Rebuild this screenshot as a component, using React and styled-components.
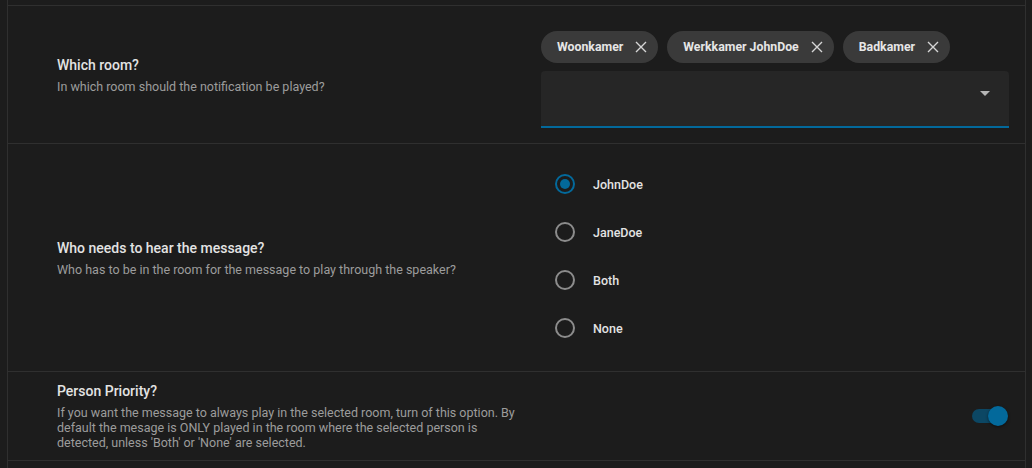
import React, { useState } from 'react';
import styled, { createGlobalStyle } from 'styled-components';

const GlobalStyle = createGlobalStyle`
    html, body {
        margin: 0;
        padding: 0;
        background: #1c1c1c;
        overflow: hidden;
        font-family: Roboto, "Liberation Sans", sans-serif;
    }
`;

const rooms = ['Woonkamer', 'Werkkamer JohnDoe', 'Badkamer'];
const people = ['JohnDoe', 'JaneDoe', 'Both', 'None'];

const CloseIcon = () => (
    <svg width="12" height="12" viewBox="0 0 12 12">
        <path d="M1 1 L11 11 M11 1 L1 11" stroke="#d6d6d6" strokeWidth="1.4" fill="none" />
    </svg>
);

export default function App() {
    const [person, setPerson] = useState('JohnDoe');
    const [priority, setPriority] = useState(true);
    return (
        <>
            <GlobalStyle />
            <Panel>
                <TopGap />
                <Row>
                    <Label>
                        <Title>Which room?</Title>
                        <Description>In which room should the notification be played?</Description>
                    </Label>
                    <Control Pad="25px 16px 15px 0">
                        <Chips>
                            {rooms.map(r => (
                                <Chip key={r}>
                                    {r}
                                    <CloseIcon />
                                </Chip>
                            ))}
                        </Chips>
                        <Select>
                            <Arrow />
                        </Select>
                    </Control>
                </Row>
                <Row>
                    <Label>
                        <Title>Who needs to hear the message?</Title>
                        <Description>Who has to be in the room for the message to play through the speaker?</Description>
                    </Label>
                    <Control Pad="16px 16px 19px 0">
                        {people.map(p => (
                            <RadioItem key={p} onClick={() => setPerson(p)}>
                                <Radio Checked={person === p} />
                                <RadioText>{p}</RadioText>
                            </RadioItem>
                        ))}
                    </Control>
                </Row>
                <Row Compact>
                    <Label>
                        <Title>Person Priority?</Title>
                        <Description>
                            If you want the message to always play in the selected room, turn of this option. By
                            default the mesage is ONLY played in the room where the selected person is
                            detected, unless 'Both' or 'None' are selected.
                        </Description>
                    </Label>
                    <Control Pad="0 16px 0 0" Align="flex-end">
                        <Toggle On={priority} onClick={() => setPriority(!priority)}>
                            <Thumb On={priority} />
                        </Toggle>
                    </Control>
                </Row>
                <Row />
            </Panel>
        </>
    );
}

const Panel = styled.div`
    margin-left: 7px;
    width: 1017px;
    height: 468px;
    border-left: 1px solid #2f2f2f;
    border-right: 1px solid #2f2f2f;
    display: flex;
    flex-direction: column;
`;
const TopGap = styled.div`
    height: 5px;
`;
const Row = styled.div`
    display: grid;
    grid-template-columns: 533px 1fr;
    align-items: center;
    border-top: 1px solid #2f2f2f;
    padding: ${props => props.Compact ? "9px 0 10px" : "0"};
    min-height: 7px;
`;
const Label = styled.div`
    padding-left: 49px;
    display: flex;
    flex-direction: column;
`;
const Title = styled.div`
    color: #e3e3e3;
    font-size: 14px;
    font-weight: 500;
    line-height: 20px;
    margin-bottom: 4px;
`;
const Description = styled.div`
    color: #9c9c9c;
    font-size: 12.5px;
    line-height: 15px;
    width: 466px;
`;
const Control = styled.div`
    padding: ${props => props.Pad};
    display: flex;
    flex-direction: column;
    align-items: ${props => props.Align || "stretch"};
`;
const Chips = styled.div`
    display: flex;
    gap: 9px;
    margin-bottom: 8px;
`;
const Chip = styled.div`
    height: 32px;
    border-radius: 16px;
    background: #3a3a3a;
    color: #e6e6e6;
    font-size: 12.3px;
    font-weight: 700;
    display: flex;
    align-items: center;
    gap: 12px;
    padding: 0 11px 0 16px;
`;
const Select = styled.div`
    height: 55px;
    background: #262626;
    border-radius: 4px 4px 0 0;
    border-bottom: 2px solid #03699b;
    position: relative;
`;
const Arrow = styled.div`
    position: absolute;
    right: 19px;
    top: 20px;
    width: 0;
    height: 0;
    border-left: 5px solid transparent;
    border-right: 5px solid transparent;
    border-top: 5px solid #b5b5b5;
`;
const RadioItem = styled.div`
    height: 48px;
    display: flex;
    align-items: center;
    padding-left: 14px;
    cursor: pointer;
`;
const Radio = styled.div`
    width: 16px;
    height: 16px;
    border-radius: 50%;
    border: 2px solid ${props => props.Checked ? "#03699b" : "#8c8c8c"};
    display: flex;
    align-items: center;
    justify-content: center;
    margin-right: 18px;
    &::after {
        content: "";
        width: 10px;
        height: 10px;
        border-radius: 50%;
        background: #03699b;
        display: ${props => props.Checked ? "block" : "none"};
    }
`;
const RadioText = styled.span`
    color: #e3e3e3;
    font-size: 12.5px;
    font-weight: 500;
`;
const Toggle = styled.div`
    width: 34px;
    height: 14px;
    border-radius: 7px;
    background: ${props => props.On ? "#0c4764" : "#5a5a5a"};
    position: relative;
    cursor: pointer;
    margin-right: 3px;
`;
const Thumb = styled.div`
    position: absolute;
    top: -3px;
    left: ${props => props.On ? "16px" : "-2px"};
    width: 20px;
    height: 20px;
    border-radius: 50%;
    background: ${props => props.On ? "#03699b" : "#bdbdbd"};
    box-shadow: 0 1px 3px rgba(0, 0, 0, 0.5);
`;
